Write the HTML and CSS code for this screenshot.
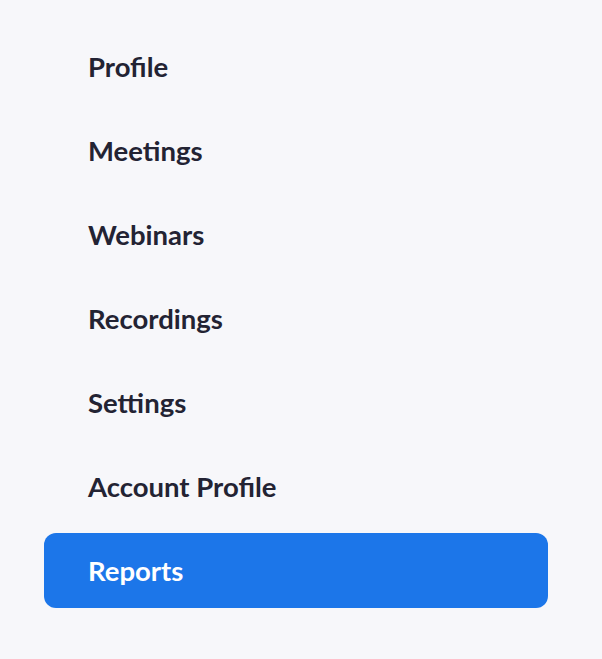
FILE: index.html
```html
<!DOCTYPE html>
<html>
<head>
<meta charset="utf-8">
<link rel="stylesheet" href="styles.css">
</head>
<body>
<nav class="menu">
  <a class="item">Profile</a>
  <a class="item">Meetings</a>
  <a class="item">Webinars</a>
  <a class="item">Recordings</a>
  <a class="item">Settings</a>
  <a class="item">Account Profile</a>
  <a class="item active">Reports</a>
</nav>
</body>
</html>
```

FILE: styles.css
```css
html, body {
  margin: 0;
  padding: 0;
  background: #f7f7fa;
}
body {
  width: 602px;
  height: 659px;
  font-family: Lato, "Open Sans", sans-serif;
}
.menu {
  display: flex;
  flex-direction: column;
  gap: 9px;
  padding: 29px 0 0 44px;
  width: 504px;
}
.item {
  display: flex;
  align-items: center;
  height: 75px;
  padding-left: 44px;
  border-radius: 12px;
  font-size: 27.5px;
  font-weight: 700;
  color: #232333;
}
.item.active {
  background: #1c76e9;
  color: #ffffff;
}
```
